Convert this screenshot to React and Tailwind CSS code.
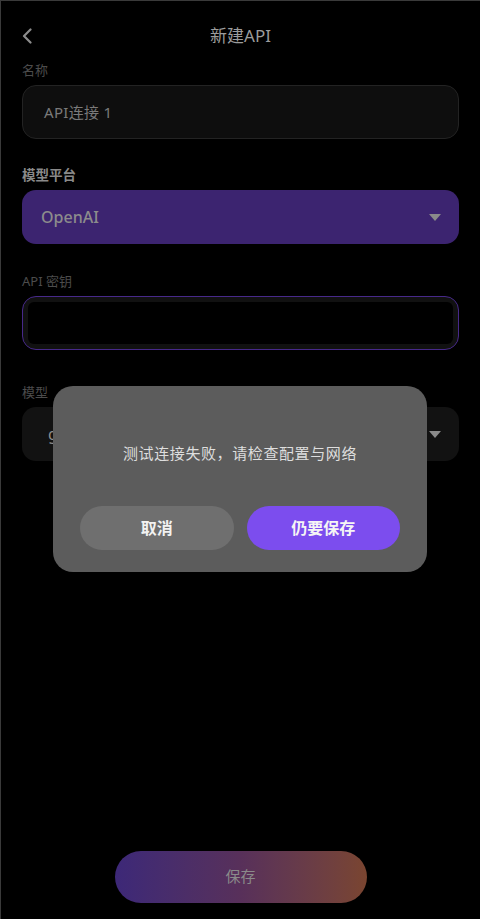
import React from "react";

function Triangle() {
  return (
    <svg width="12" height="7" viewBox="0 0 12 7" className="shrink-0">
      <path d="M0 0 H12 L6 7 Z" fill="#8a8a8a" />
    </svg>
  );
}

export default function App() {
  const font = { fontFamily: '"Noto Sans", "Noto Sans CJK SC", sans-serif' };
  return (
    <div
      className="relative flex h-[919px] w-[480px] flex-col overflow-hidden border-l border-t border-[#3a3a3a] bg-black"
      style={font}
    >
      {/* header */}
      <div className="relative flex h-[59px] items-center justify-center pt-[10px]">
        <div className="absolute left-[19px] top-[24px] flex h-[22px] w-[14px] items-center justify-center">
          <svg width="10" height="16" viewBox="0 0 10 16">
            <path d="M8.5 1.5 L2 8 L8.5 14.5" fill="none" stroke="#8c8c8c" strokeWidth="2.2" strokeLinecap="round" strokeLinejoin="round" />
          </svg>
        </div>
        <span className="text-[17px] leading-[22px] text-[#9c9c9c]">新建API</span>
      </div>

      <div className="flex flex-col px-[21px]">
        <div className="mb-[5px] text-[13px] leading-[20px] text-[#4c4c4c]">名称</div>
        <div className="flex h-[54px] items-center rounded-[14px] border border-[#232323] bg-[#0e0e0e] pl-[21px]">
          <span className="text-[15px] tracking-[0.3px] text-[#7a7a7a]">API连接 1</span>
        </div>

        <div className="mb-[5px] mt-[26px] text-[13.5px] font-semibold leading-[20px] text-[#8a8a8a]">模型平台</div>
        <div className="flex h-[54px] items-center justify-between rounded-[14px] bg-[#3c2470] pl-[19px] pr-[18px]">
          <span className="text-[16px] font-medium text-[#8c8c8c]">OpenAI</span>
          <Triangle />
        </div>

        <div className="mb-[5px] mt-[27px] text-[13px] leading-[20px] text-[#4c4c4c]">API 密钥</div>
        <div className="h-[54px] rounded-[14px] border-[1.5px] border-[#47298a] bg-[#111111] p-[5px]">
          <div className="h-full w-full rounded-[6px] bg-black" />
        </div>

        <div className="mb-[5px] mt-[32px] text-[13px] leading-[20px] text-[#4c4c4c]">模型</div>
        <div className="flex h-[54px] items-center justify-between rounded-[14px] bg-[#121212] pl-[26px] pr-[18px]">
          <span className="text-[16px] text-[#8c8c8c]">gpt-4o-mini</span>
          <Triangle />
        </div>
      </div>

      <div className="mt-auto mb-[16px] flex justify-center">
        <div className="flex h-[52px] w-[252px] items-center justify-center rounded-full bg-gradient-to-r from-[#3d2878] via-[#58305a] to-[#7a4530]">
          <span className="-mt-[2px] text-[15px] text-[#8a8a8a]">保存</span>
        </div>
      </div>

      {/* dialog */}
      <div className="absolute left-[52px] top-[385px] flex h-[186px] w-[374px] flex-col rounded-[20px] bg-[#5c5c5c] px-[27px] pb-[22px]">
        <div className="flex flex-1 items-center justify-center pt-[14px]">
          <span className="text-[15px] tracking-[0.6px] text-[#dedede]">测试连接失败，请检查配置与网络</span>
        </div>
        <div className="flex gap-[13px]">
          <div className="flex h-[44px] flex-1 items-center justify-center rounded-full bg-[#6f6f6f]">
            <span className="text-[16px] font-bold text-[#f2f2f2]">取消</span>
          </div>
          <div className="flex h-[44px] flex-1 items-center justify-center rounded-full bg-[#7c4dee]">
            <span className="text-[16px] font-bold text-[#f5f5f5]">仍要保存</span>
          </div>
        </div>
      </div>
    </div>
  );
}
